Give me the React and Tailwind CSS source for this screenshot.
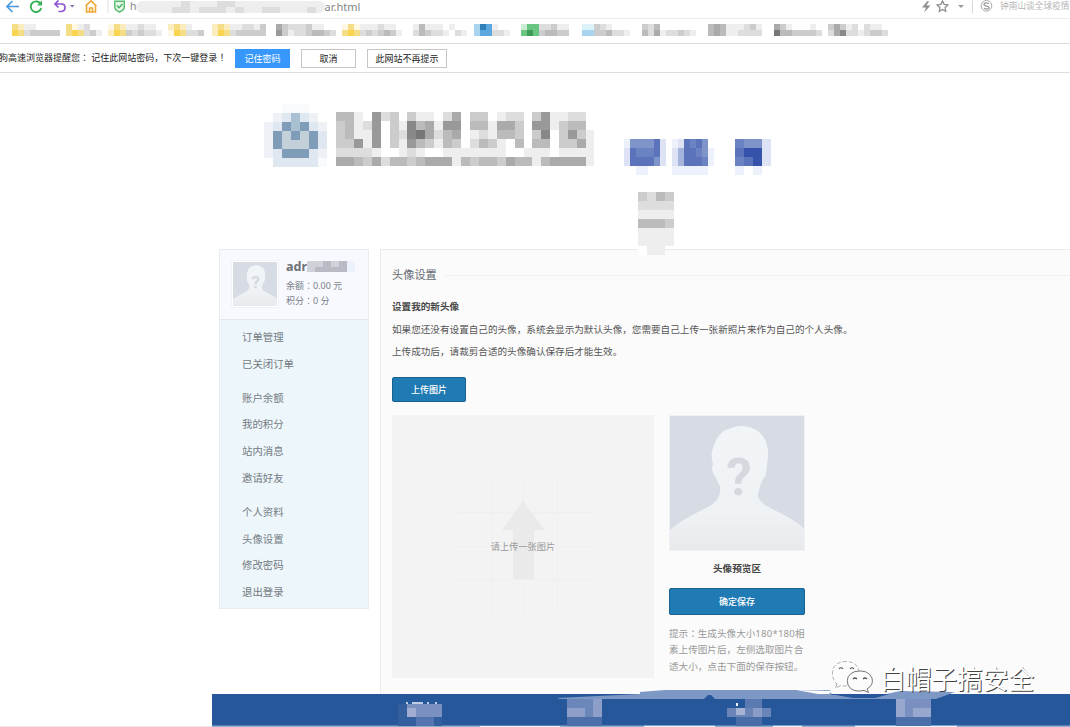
import React from "react";

const PALETTE = {
  Y: "#f5dd86", O: "#f8d44f", y: "#faecbd", w: "#fdf7e3",
  B: "#5ba7de", Q: "#a9d4f0", k: "#2f7fb8", q: "#dcf2fb",
  G: "#3f9b57", g: "#69c682", h: "#c9ecd2",
  P: "#7f9db9", p: "#a9bfd2", s: "#c3d0da", t: "#dfe7f0", u: "#eef1f5", v: "#f9fafb",
  I: "#3553ab", J: "#5a73bb", K: "#6b83c3", L: "#7f94c9", M: "#a5b4da", N: "#dde3f4", n: "#edf1fb",
  m: "#b9bac3", l: "#d0d1d9",
};

function colorOf(ch) {
  if (PALETTE[ch]) return PALETTE[ch];
  const v = parseInt(ch, 16) * 17;
  return `rgb(${v},${v},${v})`;
}

function Mosaic({ rows, cell, cellH = cell, className = "" }) {
  const w = rows[0].length * cell;
  const h = rows.length * cellH;
  return (
    <svg width={w} height={h} className={`block shrink-0 ${className}`} shapeRendering="crispEdges">
      {rows.map((row, r) =>
        [...row].map((ch, c) =>
          ch === "." ? null : (
            <rect key={`${r}-${c}`} x={c * cell} y={r * cellH} width={cell + 0.1} height={cellH + 0.1} fill={colorOf(ch)} />
          )
        )
      )}
    </svg>
  );
}

// Full-width punctuation set in the middle of its square
function Mark({ children }) {
  return <span className="font-['Noto_Sans_CJK_JP',sans-serif]" lang="ja">{children}</span>;
}

function Avatar({ className }) {
  return (
    <svg viewBox="0 0 134 134" className={className} preserveAspectRatio="none">
      <defs>
        <linearGradient id="body" x1="0" y1="0" x2="0" y2="1">
          <stop offset="0" stopColor="#f1f5f8" />
          <stop offset="0.7" stopColor="#eff2f5" />
          <stop offset="1" stopColor="#e7e9ed" />
        </linearGradient>
      </defs>
      <rect width="134" height="134" fill="#d7dbe3" />
      <path
        d="M0 114 C12 103 27 97 38 91 C47 86 51 80 50 70 C48 66 46 63 45 60 C41 56 42 51 43 48 C41 42 41 36 44 29 C47 21 52 14 59 13 C66 9 77 9 84 13 C94 17 99 29 98 41 C97 47 97 53 96 58 C95 62 92 64 91 67 C90 73 87 77 88 80 C90 88 99 91 108 96 C118 101 127 105 134 113 V134 H0 Z"
        fill="url(#body)"
      />
      <text x="69" y="79" textAnchor="middle" fontSize="51" fontWeight="700" fontFamily="Roboto, Noto Sans, sans-serif" fill="#d5d8df">?</text>
    </svg>
  );
}

const bookmarks = [
  { ml: "ml-[12px]", rows: ["Yyeeffff", "OYdccccc"] },
  { ml: "ml-[6px]", rows: ["Ywedff", "YOYdce"] },
  { ml: "ml-[6px]", rows: ["wYyeedeef", "yOYcdcdde"] },
  { ml: "ml-[6px]", rows: ["yYyeff", "wOYddc"] },
  { ml: "ml-[8px]", rows: ["yYyeeddec", "yOYdccccc"] },
  { ml: "ml-[10px]", rows: ["acdddceeff", "9ceddcbbcd"] },
  { ml: "ml-[6px]", rows: ["wYweeedeef", "YOYdcdcbce"] },
  { ml: "ml-[11px]", rows: ["ebeeefeff", "dbcddefde"] },
  { ml: "ml-[7px]", rows: ["QkBeff", "QBBdde"] },
  { ml: "ml-[11px]", rows: ["hggddcee", "gGgcbbcc"] },
  { ml: "ml-[13px]", rows: ["qqcdefff", "QQccbdde"] },
  { ml: "ml-[12px]", rows: ["cdbffffff", "bdaeddcde"] },
  { ml: "ml-[12px]", rows: ["babeeedce", "babeedddd"] },
  { ml: "ml-[12px]", rows: ["acefffef", "7bbccccd"] },
  { ml: "ml-[6px]", rows: ["cacedfdeef", "da8ddedccd"] },
];

const menuGroups = [
  ["订单管理", "已关闭订单"],
  ["账户余额", "我的积分", "站内消息", "邀请好友"],
  ["个人资料", "头像设置", "修改密码", "退出登录"],
];

function Toolbar() {
  return (
    <div className="flex h-[19px] items-start border-b border-[#ececec]">
      <svg width="110" height="18" className="shrink-0" fill="none">
        <path d="M7 6.5H19M12.5 1L7 6.5L12.5 12" stroke="#4a98e0" strokeWidth="1.7" />
        <path d="M40.8 4.3A5.3 5.3 0 1 0 41.2 8" stroke="#36b054" strokeWidth="1.9" />
        <path d="M42 0.5V5.5H37Z" fill="#36b054" />
        <path d="M55 4H61.5Q65 4 65 7.5T61.5 11.5H58.5M58.5 0.5L55 4L58.5 7.5" stroke="#8d55cf" strokeWidth="1.7" />
        <path d="M70 5H74.5L72.2 7.5Z" fill="#8a6aa8" />
        <path d="M85.5 6L91 0.8L96.5 6M86.5 5.5V12H95.5V5.5M89.5 12V8H92.5V12" stroke="#eda732" strokeWidth="1.6" />
        <path d="M108 0V13" stroke="#dedede" />
      </svg>
      <svg width="20" height="14" className="shrink-0" fill="none">
        <path d="M4.8 1.2H14.3V7Q14.3 10 9.5 12Q4.8 10 4.8 7Z" stroke="#54bb6c" strokeWidth="1.4" fill="#e4f7e8" />
        <path d="M7 5.5L9 7.7L12.5 4" stroke="#45b260" strokeWidth="1.4" />
      </svg>
      <div className="flex h-[13px] items-center text-[10.5px] leading-[13px] text-[#858585]">
        <span>h</span>
        <Mosaic cell={9} cellH={6} rows={["eeeeedeeeddeeeeeeeeee", "eeeeddedddedeeddeeede"]} className="-ml-px rounded-lg" />
        <span className="text-[11px]">ar.html</span>
      </div>
      <svg width="92" height="14" className="ml-auto shrink-0 overflow-visible" fill="none">
        <g transform="translate(9.500 0.500)">
          <path d="M10 0.5L4.5 7H8.5L6.5 12L13 5H9L11.5 0.5Z" fill="#8d8d8d" />
          <path d="M25 0.500L26.6 3.900L30.400 4.400L27.6 7L28.2 10.7L25 8.900L21.8 10.7L22.4 7L19.600 4.400L23.4 3.900Z" stroke="#8d8d8d" strokeWidth="1.3" />
          <path d="M40.5 4.500H46.5L43.5 7.500Z" fill="#999" />
          <path d="M55 0V13" stroke="#d7d7d7" />
          <circle cx="69" cy="5.3" r="5.3" stroke="#aaa" />
          <path d="M71.5 3Q66 1.5 66.5 4.2Q67.5 5.7 70.5 6Q72.5 7.2 70.5 8.4Q68.5 8.900 66.5 7.7" stroke="#999" strokeWidth="1.2" />
        </g>
      </svg>
      <span className="w-[70px] shrink-0 whitespace-nowrap text-[8.700px] leading-[13px] text-[#b5b5b5]">钟南山谈全球疫情</span>
    </div>
  );
}

function NoticeButton({ className, children }) {
  return <button className={`h-[19px] border text-[9px] leading-[16px] whitespace-nowrap ${className}`}>{children}</button>;
}

function Sidebar() {
  return (
    <aside className="h-[360px] w-[150px] shrink-0 border border-[#e6edf1] bg-[#edf6fb]">
      <div className="flex h-[70px] border-b border-[#e0e7ee] bg-[#f7f9fe] pl-[11px] pt-[10px]">
        <div className="h-[48px] w-[48px] border border-[#f0f2f6] bg-white p-px">
          <Avatar className="block h-[44px] w-[44px]" />
        </div>
        <div className="ml-[7px] text-[9px] leading-[15px] text-[#7b7f88]">
          <div className="flex h-[13px] items-center text-[12.5px] font-bold leading-[13px] text-[#6e7077]">
            adr
            <Mosaic cell={8} cellH={5.5} rows={["llmlmn", "lmmmmn"]} />
          </div>
          <p className="mt-[5px] whitespace-nowrap">余额<Mark>：</Mark>0.00 元</p>
          <p className="whitespace-nowrap">积分<Mark>：</Mark>0 分</p>
        </div>
      </div>
      <nav className="flex flex-col gap-[7px] pt-[4px]">
        {menuGroups.map((group) => (
          <ul key={group[0]}>
            {group.map((item) => (
              <li key={item} className="h-[26.8px] pl-[22px] text-[10.4px] leading-[26.8px] text-[#747b82]">{item}</li>
            ))}
          </ul>
        ))}
      </nav>
    </aside>
  );
}

function UploadArea() {
  return (
    <div className="grid h-[263px] w-[262px] shrink-0 place-items-center bg-[#f3f3f3]">
      <svg width="262" height="263" className="col-start-1 row-start-1">
        <path d="M65 97.5H200M65 131.5H200M65 164.5H200M99.5 64V200M131.5 64V200M165.5 64V200" stroke="#efefef" />
        <path d="M131 86L152.500 115H142V164H121V115H110Z" fill="#eaeaea" />
      </svg>
      <span className="col-start-1 row-start-1 pt-px text-[9.2px] text-[#999]">请上传一张图片</span>
    </div>
  );
}

function Content() {
  return (
    <main className="h-[445px] grow border-l border-t border-[#ececec] bg-[#fbfbfb] pl-[11px] pt-[16px] text-[9.6px] text-[#555]">
      <div className="flex h-[18px] items-center">
        <h1 className="text-[11.2px] leading-[18px] text-[#666a73]">头像设置</h1>
        <div className="ml-[8px] h-px grow bg-[#f1f1f1]" />
      </div>
      <h2 className="mt-[13px] h-[20px] font-bold leading-[20px] text-[#484848]">设置我的新头像</h2>
      <p className="mt-[2px] h-[22px] whitespace-nowrap leading-[22px]">如果您还没有设置自己的头像，系统会显示为默认头像，您需要自己上传一张新照片来作为自己的个人头像。</p>
      <p className="h-[22px] whitespace-nowrap leading-[22px]">上传成功后，请裁剪合适的头像确认保存后才能生效。</p>
      <button className="mt-[14px] block h-[25px] w-[74px] rounded-[2px] border border-[#17628f] bg-[#207bb5] text-[9px] font-medium leading-[23px] text-white">上传图片</button>
      <div className="mt-[13px] flex">
        <UploadArea />
        <div className="ml-[15px] w-[136px]">
          <div className="h-[136px] border border-[#f0f1f3] bg-white">
            <Avatar className="block h-[134px] w-[134px]" />
          </div>
          <p className="mt-[8px] h-[20px] text-center font-bold leading-[20px] text-[#444]">头像预览区</p>
          <button className="mt-[9px] block h-[27px] w-full rounded-[2px] border border-[#17628f] bg-[#207bb5] text-[9px] font-medium leading-[25px] text-white">确定保存</button>
          <p className="mt-[10px] whitespace-nowrap leading-[16.300px] text-[#999]">
            提示<Mark>：</Mark>生成头像大小<span className="tracking-[0.2px]">180*180</span>相<br />素上传图片后，左侧选取图片合<br />适大小，点击下面的保存按钮。
          </p>
        </div>
      </div>
    </main>
  );
}

function SiteHeader() {
  return (
    <header className="flex h-[176px] items-start pl-[264px]">
      <Mosaic
        cell={8.93}
        className="mt-[31px]"
        rows={["..vvv..", ".utptu.", "utPpPtu", "uPsPsPt", "uPsssPt", "utPPPtu", ".tttttv"]}
      />
      <Mosaic
        cell={8.93}
        className="ml-[9px] mt-[39px]"
        rows={[
          "bbef9dcfceefdafccfeddfc9eeddf",
          "cbed9fce8bae99fbbeaacf99ecbbf",
          "cbee9fcd87adbafedebbcfc8fc9ce",
          "cc9e9fce9bcebcfdbcefbfbbfccae",
          "ddddeffedeffeeeeeeeffeeefeeee",
          "aabcadbbcbaaaebcbbcabbebaaaae",
        ]}
      />
      <div className="ml-[30px] mt-[66px] flex flex-col">
        <div className="flex">
          <Mosaic cell={6} cellH={9} rows={["nLLLLJN", "NJKKKJN", "NJJJJLN", "..nn..."]} />
          <Mosaic cell={6} cellH={9} className="ml-[6px]" rows={["nNJKJL.", "NMJJKLn", "NMJJJKn", "nnnnnn."]} />
          <Mosaic cell={8.9} cellH={9} className="ml-[21px]" rows={["KLLN", "JIIN", "KJIN", "n.n."]} />
        </div>
        <Mosaic cell={9} className="relative z-10 ml-[14px] mt-[17px]" rows={["cdbc", "dddd", "eeee", "bbbc", "eeee", "eeee", "fee."]} />
      </div>
    </header>
  );
}

function Footer() {
  return (
    <footer className="h-[37px] w-full shrink-0">
      <svg width="1070" height="37" className="block">
        <path d="M0 36.500H212" stroke="#e6e6e6" />
        <rect x="212" y="4" width="858" height="32" fill="#27579b" />
        <rect x="212" y="35.500" width="858" height="1.500" fill="#91add0" />
        <path d="M480 37V36H560V37ZM644 37V35.800H715V37ZM773 37V35.800H802V37ZM855 37V35.800H957V37Z" fill="#edf3fa" />
        <path d="M557 8L640 4V2L665 0H830L832 5H882L900 1L955 2L936 9H715L711 5H708L704 9H560Z" fill="#7e98c5" />
        <path d="M796 0L832 1L829 4H818Z" fill="#fbfbfb" />
        <path d="M830 4H890L875 8H853Z" fill="#27579b" />
        <path d="M407 15V12M412 13H423M428 15V12M436 15V12" stroke="#f0f4fb" strokeWidth="1.500" />
        <path d="M737 13V16" stroke="#f0f4fb" strokeWidth="2" />
        <g shapeRendering="crispEdges">
          <path d="M398 14H442V36H398Z" fill="#345f9f" />
          <path d="M407 14H442V27H407Z" fill="#7990c0" />
          <path d="M407 18H416V27H407Z" fill="#a0acd0" />
          <path d="M416 27H434V36H416Z" fill="#5374ae" />
          <path d="M567 9H602V27H567Z" fill="#6b86b9" />
          <path d="M567 18H585V27H567ZM593 9H602V27H593Z" fill="#8d9fc9" />
          <path d="M567 27H602V36H567Z" fill="#4c6ea9" />
          <path d="M727 18H771V27H727Z" fill="#6a84b8" />
          <path d="M736 18H745V25H736Z" fill="#a7b3d5" />
          <path d="M745 9H762V18H745Z" fill="#5a7ab1" />
          <path d="M753 18H762V27H753Z" fill="#899cc6" />
          <path d="M736 27H762V36H736Z" fill="#476ca8" />
          <path d="M896 9H931V27H896Z" fill="#7990c0" />
          <path d="M896 9H905V27H896ZM913 18H931V27H913Z" fill="#98a7ce" />
          <path d="M896 27H931V36H896Z" fill="#4c6ea9" />
        </g>
      </svg>
    </footer>
  );
}

function Watermark() {
  return (
    <div className="absolute left-[830px] top-[658px] flex items-start">
      <svg width="46" height="40" fill="#fcfcfc" className="shrink-0">
        <path d="M7 26L5.500 30L11 27.500Q17 29 22 26Q28 23 29 16Q29 4 16 3.500Q3 4 2.500 15Q2.500 22 7 26Z" stroke="#999" strokeWidth="0.800" strokeDasharray="4 2" />
        <path d="M37 31L38.500 34.500L34 32.500Q22 35 18 27Q15 17 25 13.500Q38 11 42 20Q44 27 37 31Z" stroke="#666" strokeWidth="0.900" />
        <path d="M9 11Q11 8.500 13 11M20 11Q22 8.500 24 11M23 21Q25 19 27 21M33 21Q35 19 37 21" fill="none" stroke="#555" strokeWidth="1.200" />
      </svg>
      <span className="ml-[4px] whitespace-nowrap text-[25.700px] leading-[43px] text-white [text-shadow:1px_1px_0_#444]">白帽子搞安全</span>
    </div>
  );
}

export default function App() {
  return (
    <div className="relative flex h-[727px] w-[1070px] flex-col overflow-hidden bg-white font-['Noto_Sans','Noto_Sans_CJK_SC',sans-serif]">
      <Toolbar />
      <div className="flex h-[25px] items-start border-b border-[#dcdcdc] pt-[5px]">
        {bookmarks.map((b, i) => (
          <Mosaic key={i} rows={b.rows} cell={6} className={b.ml} />
        ))}
      </div>
      <div className="flex h-[29px] items-start border-b border-[#dedede] pt-[5px]">
        <div className="flex w-[235px] shrink-0 overflow-hidden text-[9px] leading-[18px] text-[#222]">
          <span className="ml-[-1px] whitespace-nowrap">狗高速浏览器提醒您<Mark>：</Mark> 记住此网站密码，下次一键登录<Mark>！</Mark></span>
        </div>
        <NoticeButton className="w-[55px] border-[#3897fb] bg-[#3897fb] text-white">记住密码</NoticeButton>
        <NoticeButton className="ml-[11px] w-[55px] border-[#c6c6c6] text-[#222]">取消</NoticeButton>
        <NoticeButton className="ml-[11px] w-[80px] border-[#c6c6c6] text-[#222]">此网站不再提示</NoticeButton>
      </div>
      <SiteHeader />
      <div className="flex h-[441px] shrink-0 items-start gap-[11px] pl-[219px]">
        <Sidebar />
        <Content />
      </div>
      <Footer />
      <Watermark />
    </div>
  );
}
